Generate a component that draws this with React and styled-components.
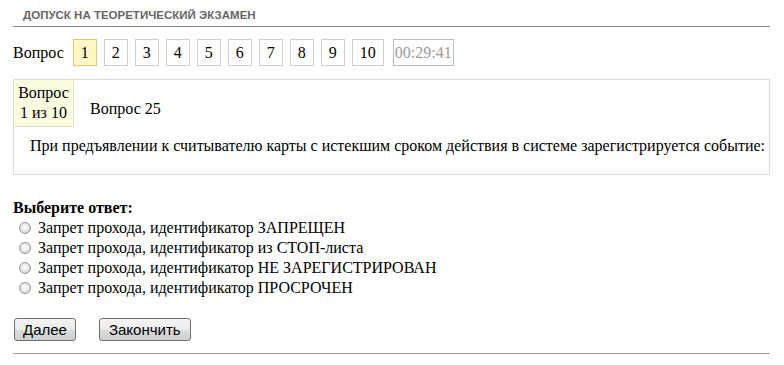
import React from "react";
import styled, { createGlobalStyle } from "styled-components";

const GlobalStyle = createGlobalStyle`
  html, body {
    margin: 0;
    padding: 0;
    background: #fff;
  }
  body {
    font-family: "Liberation Serif", "Times New Roman", serif;
    font-size: 16px;
    color: #000;
  }
`;

const Page = styled.div`
  width: 757px;
  padding: 7px 0 0 13px;
`;

const Title = styled.h2`
  margin: 0;
  padding: 1px 0 4px 10px;
  font-family: "Liberation Sans", Arial, sans-serif;
  font-size: 11.5px;
  font-weight: bold;
  color: #666;
  line-height: 14px;
  border-bottom: 1px solid #8a8a8a;
`;

const Nav = styled.div`
  display: flex;
  align-items: center;
  gap: 7px;
  margin-top: 12px;
  height: 27px;
`;

const NavLabel = styled.span`
  margin-right: 2px;
`;

const NumBox = styled.span`
  display: inline-flex;
  align-items: center;
  justify-content: center;
  min-width: 22px;
  height: 25px;
  padding: 0 ${({ $wide }) => ($wide ? "4px" : "0")};
  border: 1px solid ${({ $active }) => ($active ? "#dcc680" : "#cfcfcf")};
  background: ${({ $active }) => ($active ? "#fff7c4" : "#fff")};
  color: ${({ $muted }) => ($muted ? "#999" : "#000")};
`;

const Timer = styled(NumBox)`
  margin-left: 2px;
  padding: 0 1px;
  border-color: #bdbdbd;
`;

const Panel = styled.div`
  margin-top: 13px;
  border: 1px solid #dcdcdc;
  height: 94px;
`;

const PanelHead = styled.div`
  display: flex;
  align-items: stretch;
`;

const Counter = styled.div`
  width: 60px;
  height: 47px;
  background: #fbfbe0;
  border-right: 1px solid #e2e2cc;
  border-bottom: 1px solid #e2e2cc;
  text-align: center;
  line-height: 20px;
  padding-top: 3px;
  box-sizing: border-box;
`;

const QNum = styled.div`
  padding: 20px 0 0 16px;
`;

const QText = styled.p`
  margin: 10px 0 0 16px;
`;

const AnswerBlock = styled.div`
  margin-top: 23px;
`;

const AnswerTitle = styled.div`
  font-weight: bold;
  line-height: 20px;
`;

const Option = styled.label`
  display: flex;
  align-items: center;
  height: 20px;
  padding-left: 6px;
`;

const Radio = styled.input`
  width: 12px;
  height: 12px;
  margin: 0 7px 0 0;
  appearance: none;
  border-radius: 50%;
  border: 1px solid #939393;
  background: radial-gradient(circle at 50% 40%, #ffffff 0%, #e6e6e6 55%, #c9c9c9 100%);
`;

const Buttons = styled.div`
  display: flex;
  gap: 23px;
  margin-top: 20px;
  padding-left: 1px;
`;

const Button = styled.button`
  height: 23px;
  padding: 0 ${({ $pad }) => $pad}px;
  font-family: "Liberation Sans", Arial, sans-serif;
  font-size: 15px;
  line-height: 21px;
  color: #000;
  border: 1px solid #707070;
  border-radius: 3px;
  background: linear-gradient(#f4f4f4 0%, #ebebeb 50%, #dddddd 51%, #cfcfcf 100%);
`;

const Divider = styled.div`
  margin-top: 12px;
  border-top: 1px solid #a0a0a0;
`;

const options = [
  "Запрет прохода, идентификатор ЗАПРЕЩЕН",
  "Запрет прохода, идентификатор из СТОП-листа",
  "Запрет прохода, идентификатор НЕ ЗАРЕГИСТРИРОВАН",
  "Запрет прохода, идентификатор ПРОСРОЧЕН",
];

export default function App() {
  return (
    <>
      <GlobalStyle />
      <Page>
        <Title>ДОПУСК НА ТЕОРЕТИЧЕСКИЙ ЭКЗАМЕН</Title>
        <Nav>
          <NavLabel>Вопрос</NavLabel>
          {[1, 2, 3, 4, 5, 6, 7, 8, 9, 10].map((n) => (
            <NumBox key={n} $active={n === 1} $wide={n === 10}>
              {n}
            </NumBox>
          ))}
          <Timer $muted>00:29:41</Timer>
        </Nav>
        <Panel>
          <PanelHead>
            <Counter>
              Вопрос
              <br />1 из 10
            </Counter>
            <QNum>Вопрос 25</QNum>
          </PanelHead>
          <QText>
            При предъявлении к считывателю карты с истекшим сроком действия в системе зарегистрируется событие:
          </QText>
        </Panel>
        <AnswerBlock>
          <AnswerTitle>Выберите ответ:</AnswerTitle>
          {options.map((o) => (
            <Option key={o}>
              <Radio type="radio" name="answer" />
              {o}
            </Option>
          ))}
        </AnswerBlock>
        <Buttons>
          <Button $pad={8}>Далее</Button>
          <Button $pad={9}>Закончить</Button>
        </Buttons>
        <Divider />
      </Page>
    </>
  );
}
